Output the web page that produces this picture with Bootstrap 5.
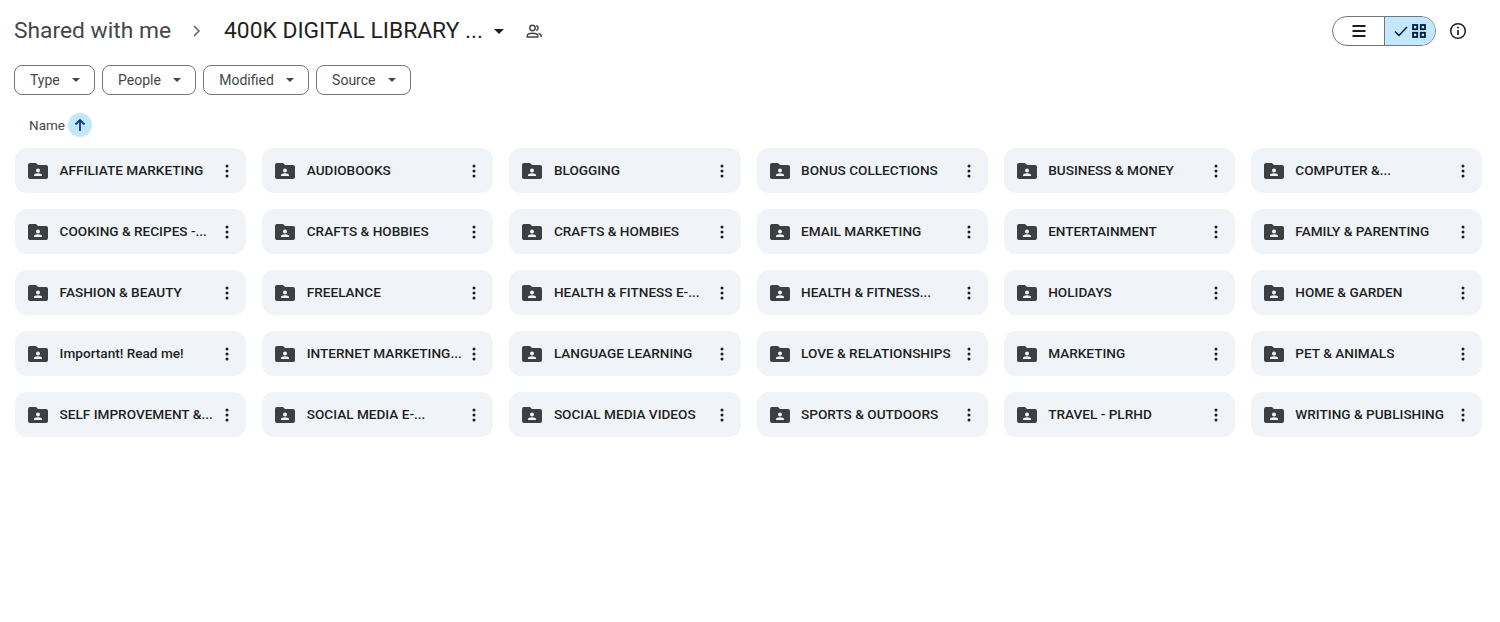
<!DOCTYPE html>
<html lang="en">
  <head>
    <meta charset="UTF-8" />
    <title>400K DIGITAL LIBRARY - Google Drive</title>
    <link href="https://cdn.jsdelivr.net/npm/bootstrap@5.3.0/dist/css/bootstrap.min.css" rel="stylesheet" />
    <style>
      body { font-family: Roboto, "Liberation Sans", sans-serif; color: #1f1f1f; background: #fff; }
      .drive-page { padding: 14px 18px 0 14px; }
      .title-bar { height: 34px; }
      .crumb-root { font-size: 22.8px; color: #444746; padding-top: 1px; }
      .crumb-sep { margin: 0 22px 0 21px; }
      .crumb-current { font-size: 22.8px; color: #1f1f1f; padding-top: 1px; }
      .caret-down { width: 0; height: 0; border-left: 5px solid transparent; border-right: 5px solid transparent; border-top: 5px solid currentColor; }
      .crumb-caret { margin-left: 11px; }
      .share-icon { margin-left: 21px; }
      .view-toggle { width: 104px; height: 30px; border: 1px solid #747775; border-radius: 15px; overflow: hidden; }
      .view-half { height: 100%; }
      .view-list { width: 51px; }
      .view-grid { flex: 1; background: #c2e7ff; border-left: 1px solid #747775; color: #001d35; }
      .info-btn { margin-left: 13px; margin-right: 15px; }
      .filter-row { margin-top: 17px; gap: 7.300px; }
      .filter-chip { height: 30px; padding: 0 14px 0 15px; border: 1px solid #747775; border-radius: 8px; font-size: 14px; color: #444746; gap: 12px; }
      .filter-chip .caret-down { border-left-width: 4px; border-right-width: 4px; border-top-width: 4px; }
      .sort-row { margin-top: 14px; padding-left: 15px; height: 32px; font-size: 13.500px; color: #444746; }
      .sort-arrow { width: 24px; height: 24px; border-radius: 50%; background: #c2e7ff; margin-left: 3px; }
      .folder-grid { display: grid; grid-template-columns: repeat(6, 1fr); gap: 16px; margin: 7px 0 0 1.100px; }
      .folder-tile { height: 45px; background: #f0f4f9; border-radius: 12px; padding: 0 9px 0 13px; font-size: 14px; }
      .folder-name { margin-left: 11.500px; flex: 1; min-width: 0; white-space: nowrap; color: #1f1f1f; font-size: 13.600px; font-weight: 500; }
      .tile-menu { width: 20px; color: #1f1f1f; }
    </style>
  </head>
  <body>
    <div class="drive-page">
      <div class="title-bar d-flex align-items-center">
        <span class="crumb-root">Shared with me</span>
        <svg class="crumb-sep" width="10" height="14" viewBox="0 0 10 14"><path d="M2 2l5 5-5 5" fill="none" stroke="#5f6368" stroke-width="1.5"/></svg>
        <span class="crumb-current">400K DIGITAL LIBRARY ...</span>
        <span class="caret-down crumb-caret"></span>
        <svg class="share-icon" width="18" height="18" viewBox="0 0 24 24" fill="none" stroke="#444746" stroke-width="2"><circle cx="10" cy="8" r="3.600"/><path d="M3 20v-1.500c0-2 3-3.500 7-3.500s7 1.500 7 3.500V20z"/><path d="M15 4.600a3.600 3.600 0 0 1 0 6.800M18 15.300c2 .6 3.500 1.700 3.500 3.200V20"/></svg>
        <div class="ms-auto d-flex align-items-center">
          <div class="view-toggle d-flex">
            <div class="view-half view-list d-flex align-items-center justify-content-center">
              <svg width="16" height="14" viewBox="0 0 16 14"><path d="M1.500 2h13M1.500 7h13M1.500 12h13" stroke="#1f1f1f" stroke-width="1.900"/></svg>
            </div>
            <div class="view-half view-grid d-flex align-items-center justify-content-center gap-1">
              <svg width="14" height="12" viewBox="0 0 14 12"><path d="M1 6.500l4 4 8-8.500" fill="none" stroke="#001d35" stroke-width="1.500"/></svg>
              <svg width="14" height="14" viewBox="0 0 14 14" fill="none" stroke="#001d35" stroke-width="1.800"><rect x="1" y="1" width="4.200" height="4.200"/><rect x="8.800" y="1" width="4.200" height="4.200"/><rect x="1" y="8.800" width="4.200" height="4.200"/><rect x="8.800" y="8.800" width="4.200" height="4.200"/></svg>
            </div>
          </div>
          <svg class="info-btn" width="18" height="18" viewBox="0 0 18 18"><circle cx="9" cy="9" r="7.300" fill="none" stroke="#1f1f1f" stroke-width="1.500"/><path d="M9 8v5" stroke="#1f1f1f" stroke-width="1.700"/><circle cx="9" cy="5.600" r="1" fill="#1f1f1f"/></svg>
        </div>
      </div>

      <div class="filter-row d-flex">
        <div class="filter-chip d-flex align-items-center">Type <span class="caret-down"></span></div>
        <div class="filter-chip d-flex align-items-center">People <span class="caret-down"></span></div>
        <div class="filter-chip d-flex align-items-center">Modified <span class="caret-down"></span></div>
        <div class="filter-chip d-flex align-items-center">Source <span class="caret-down"></span></div>
      </div>

      <div class="sort-row d-flex align-items-center">
        Name
        <span class="sort-arrow d-flex align-items-center justify-content-center">
          <svg width="14" height="14" viewBox="0 0 14 14"><path d="M7 13V2M2.500 6.500L7 2l4.500 4.500" fill="none" stroke="#0b3d75" stroke-width="1.800"/></svg>
        </span>
      </div>

      <div class="folder-grid" id="folders"></div>
    </div>

    <script src="https://cdn.jsdelivr.net/npm/bootstrap@5.3.0/dist/js/bootstrap.bundle.min.js"></script>
    <script>
      const names = [
        'AFFILIATE MARKETING', 'AUDIOBOOKS', 'BLOGGING', 'BONUS COLLECTIONS', 'BUSINESS & MONEY', 'COMPUTER &...',
        'COOKING & RECIPES -...', 'CRAFTS & HOBBIES', 'CRAFTS & HOMBIES', 'EMAIL MARKETING', 'ENTERTAINMENT', 'FAMILY & PARENTING',
        'FASHION & BEAUTY', 'FREELANCE', 'HEALTH & FITNESS E-...', 'HEALTH & FITNESS...', 'HOLIDAYS', 'HOME & GARDEN',
        'Important! Read me!', 'INTERNET MARKETING...', 'LANGUAGE LEARNING', 'LOVE & RELATIONSHIPS', 'MARKETING', 'PET & ANIMALS',
        'SELF IMPROVEMENT &...', 'SOCIAL MEDIA E-...', 'SOCIAL MEDIA VIDEOS', 'SPORTS & OUTDOORS', 'TRAVEL - PLRHD', 'WRITING & PUBLISHING',
      ];
      const folderIcon = '<svg width="20" height="18" viewBox="0 0 20 18"><path fill-rule="evenodd" fill="#3c4043" d="M2 1h6l2 2h8a2 2 0 0 1 2 2v10a2 2 0 0 1-2 2H2a2 2 0 0 1-2-2V3a2 2 0 0 1 2-2zm8 5.500a2 2 0 1 0 0 4 2 2 0 0 0 0-4zM6 14h8v-1c0-1-2-1.700-4-1.700S6 12 6 13z"/></svg>';
      const menuIcon = '<svg width="4" height="14" viewBox="0 0 4 14" fill="#1f1f1f"><circle cx="2" cy="2" r="1.500"/><circle cx="2" cy="7" r="1.500"/><circle cx="2" cy="12" r="1.500"/></svg>';
      document.getElementById('folders').innerHTML = names
        .map(
          (name) => `<div class="folder-tile d-flex align-items-center">
            ${folderIcon}
            <span class="folder-name"></span>
            <span class="tile-menu d-flex justify-content-center">${menuIcon}</span>
          </div>`,
        )
        .join('');
      document.querySelectorAll('.folder-name').forEach((el, i) => {
        el.textContent = names[i];
      });
    </script>
  </body>
</html>
